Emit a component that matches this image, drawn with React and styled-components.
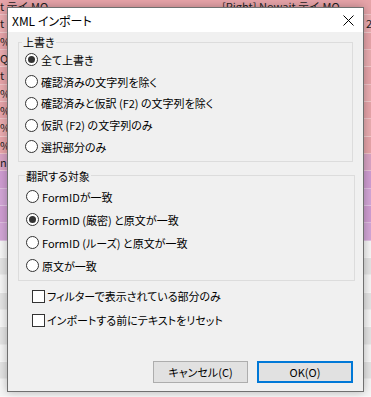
import React from 'react';
import styled, { createGlobalStyle } from 'styled-components';

const UI_FONT = `"Noto Sans CJK JP", "Noto Sans", sans-serif`;

const GlobalStyle = createGlobalStyle`
  html, body { margin: 0; padding: 0; background: #ffffff; }
  body {
    width: 371px;
    height: 397px;
    overflow: hidden;
    font-family: ${UI_FONT};
    font-feature-settings: "palt";
  }
`;

const Screen = styled.div`
  position: relative;
  width: 371px;
  height: 397px;
  overflow: hidden;
`;

const Sheet = styled.div`
  display: flex;
  flex-direction: column;
  margin-top: -2px;
`;

const SheetRow = styled.div`
  display: grid;
  grid-template-columns: 220px 144px 1fr;
  height: 17.33px;
  box-sizing: border-box;
  border-bottom: 1px solid ${(p) => p.$line};
  background: ${(p) => p.$bg};
  font: 11px/16px ${UI_FONT};
  color: #1e1e1e;
`;

const SheetCell = styled.div`
  white-space: nowrap;
  overflow: hidden;
  padding-left: ${(p) => p.$pad || 0}px;
`;

const Dialog = styled.div`
  position: absolute;
  left: 7px;
  top: 7px;
  width: 357px;
  height: 385px;
  box-sizing: border-box;
  border: 1px solid #707070;
  background: #f0f0f0;
  display: flex;
  flex-direction: column;
  box-shadow: 0 0 9px rgba(0, 0, 0, 0.28);
  font-family: ${UI_FONT};
  font-feature-settings: "palt";
  color: #000;
`;

const TitleBar = styled.div`
  height: 24px;
  flex: none;
  background: #ffffff;
  display: flex;
  align-items: center;
  justify-content: space-between;
  padding-left: 4px;
  font-size: 12px;
`;

const CloseButton = styled.div`
  width: 30px;
  height: 24px;
  display: flex;
  align-items: center;
  justify-content: center;
`;

const Body = styled.div`
  flex: 1;
  display: flex;
  flex-direction: column;
  padding: 0 8px 8px 10px;
`;

const Group = styled.fieldset`
  margin: ${(p) => p.$mt}px ${(p) => p.$mr}px 0 0;
  padding: ${(p) => p.$pt}px 0 ${(p) => p.$pb}px ${(p) => p.$pl}px;
  border: 1px solid #dcdcdc;
  min-width: 0;
`;

const Legend = styled.legend`
  padding: 0 1px;
  margin-left: ${(p) => p.$ml}px;
  font-size: 11px;
  line-height: 14px;
`;

const Option = styled.label`
  display: flex;
  align-items: center;
  gap: 3px;
  height: ${(p) => p.$h}px;
  font-size: 11px;
  white-space: nowrap;
`;

const RadioMark = styled.span`
  flex: none;
  width: 13px;
  height: 13px;
  box-sizing: border-box;
  border: 1px solid #333333;
  border-radius: 50%;
  background: #ffffff;
  display: flex;
  align-items: center;
  justify-content: center;
  &::after {
    content: '';
    width: 7px;
    height: 7px;
    border-radius: 50%;
    background: #333333;
    display: ${(p) => (p.$on ? 'block' : 'none')};
  }
`;

const CheckList = styled.div`
  display: flex;
  flex-direction: column;
  margin: 3px 0 0 14px;
`;

const CheckRow = styled.label`
  display: flex;
  align-items: center;
  gap: 2px;
  height: 24px;
  font-size: 11px;
  white-space: nowrap;
`;

const CheckBox = styled.span`
  flex: none;
  width: 13px;
  height: 13px;
  box-sizing: border-box;
  border: 1px solid #333333;
  background: #ffffff;
`;

const Spacer = styled.div`
  flex: 1;
`;

const ButtonRow = styled.div`
  display: flex;
  justify-content: flex-end;
  gap: 9px;
  padding-right: 2px;
`;

const Button = styled.button`
  width: ${(p) => p.$w}px;
  height: 22px;
  box-sizing: border-box;
  background: #e1e1e1;
  border: ${(p) => (p.$primary ? '2px solid #0078d7' : '1px solid #adadad')};
  font-family: ${UI_FONT};
  font-feature-settings: "palt";
  font-size: 11px;
  color: #000;
  padding: 0;
  display: flex;
  align-items: center;
  justify-content: center;
`;

const pinkA = '#e7a4a9';
const pinkB = '#eaacb0';
const purpA = '#cf9dd2';
const purpB = '#d3a6d7';
const greyA = '#e4e4e4';
const greyB = '#f6f6f6';

const rows = [
  { bg: pinkA, a: 't テイ MO', b: '[Right] Nowait テイ MO' },
  { bg: pinkB, a: 't', c: '2' },
  { bg: pinkA, a: '%' },
  { bg: pinkB, a: 'Q' },
  { bg: pinkA, a: 't' },
  { bg: pinkB, a: '%' },
  { bg: pinkA, a: '%' },
  { bg: pinkB, a: '%' },
  { bg: pinkA, a: '%' },
  { bg: '#d9a3c4', a: 'nd' },
  { bg: purpA },
  { bg: purpB },
  { bg: purpA },
  { bg: purpB },
  { bg: greyB },
  { bg: greyA },
  { bg: greyB },
  { bg: greyA },
  { bg: greyB },
  { bg: greyA },
  { bg: greyB },
  { bg: greyA },
  { bg: greyB },
  { bg: greyA, b: '耳ト 。' },
];

const overwriteOptions = [
  '全て上書き',
  '確認済みの文字列を除く',
  '確認済みと仮訳 (F2) の文字列を除く',
  '仮訳 (F2) の文字列のみ',
  '選択部分のみ',
];

const targetOptions = [
  'FormIDが一致',
  'FormID (厳密) と原文が一致',
  'FormID (ルーズ) と原文が一致',
  '原文が一致',
];

export default function App() {
  return (
    <Screen>
      <GlobalStyle />
      <Sheet>
        {rows.map((r, i) => (
          <SheetRow key={i} $bg={r.bg} $line="rgba(255,255,255,0.35)">
            <SheetCell>{r.a || ''}</SheetCell>
            <SheetCell $pad={2}>{r.b || ''}</SheetCell>
            <SheetCell $pad={2}>{r.c || ''}</SheetCell>
          </SheetRow>
        ))}
      </Sheet>

      <Dialog>
        <TitleBar>
          <span>XML インポート</span>
          <CloseButton>
            <svg width="11" height="11" viewBox="0 0 11 11">
              <path d="M0.5 0.5 L10.5 10.5 M10.5 0.5 L0.5 10.5" stroke="#000" strokeWidth="1" fill="none" />
            </svg>
          </CloseButton>
        </TitleBar>
        <Body>
          <Group $mt={3} $mr={2} $pt={0} $pb={3} $pl={6}>
            <Legend $ml={-3}>上書き</Legend>
            {overwriteOptions.map((t, i) => (
              <Option key={t} $h={21.75}>
                <RadioMark $on={i === 0} />
                {t}
              </Option>
            ))}
          </Group>
          <Group $mt={7} $mr={0} $pt={2.5} $pb={3} $pl={7}>
            <Legend $ml={-1}>翻訳する対象</Legend>
            {targetOptions.map((t, i) => (
              <Option key={t} $h={23}>
                <RadioMark $on={i === 1} />
                {t}
              </Option>
            ))}
          </Group>
          <CheckList>
            <CheckRow>
              <CheckBox />
              フィルターで表示されている部分のみ
            </CheckRow>
            <CheckRow>
              <CheckBox />
              インポートする前にテキストをリセット
            </CheckRow>
          </CheckList>
          <Spacer />
          <ButtonRow>
            <Button $w={95}>キャンセル(C)</Button>
            <Button $w={96} $primary>OK(O)</Button>
          </ButtonRow>
        </Body>
      </Dialog>
    </Screen>
  );
}
